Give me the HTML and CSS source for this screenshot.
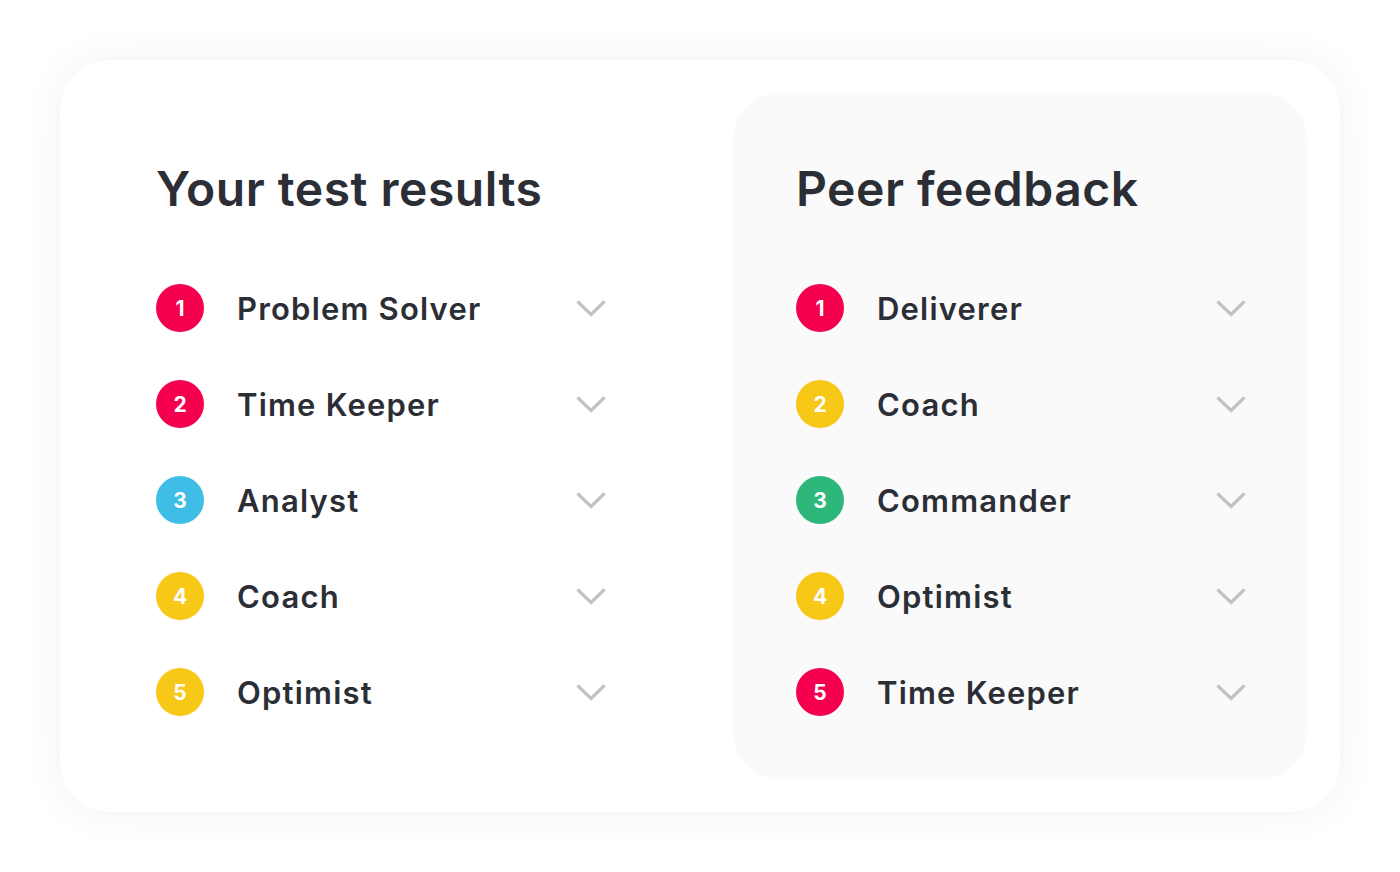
FILE: index.html
```html
<!DOCTYPE html>
<html lang="en">
<head>
    <meta charset="UTF-8">
    <meta name="viewport" content="width=device-width, initial-scale=1.0">
    <title>Results</title>
    <link rel="stylesheet" href="styles.css">
</head>
<body>
    <div class="card">
        <section class="column">
            <h2>Your test results</h2>
            <ul class="role-list">
                <li class="role"><span class="badge red">1</span><span class="role-name">Problem Solver</span><svg class="chevron" viewBox="0 0 30 17"><polyline points="1.5,1.5 15,14.5 28.5,1.5"/></svg></li>
                <li class="role"><span class="badge red">2</span><span class="role-name">Time Keeper</span><svg class="chevron" viewBox="0 0 30 17"><polyline points="1.5,1.5 15,14.5 28.5,1.5"/></svg></li>
                <li class="role"><span class="badge blue">3</span><span class="role-name">Analyst</span><svg class="chevron" viewBox="0 0 30 17"><polyline points="1.5,1.5 15,14.5 28.5,1.5"/></svg></li>
                <li class="role"><span class="badge yellow">4</span><span class="role-name">Coach</span><svg class="chevron" viewBox="0 0 30 17"><polyline points="1.5,1.5 15,14.5 28.5,1.5"/></svg></li>
                <li class="role"><span class="badge yellow">5</span><span class="role-name">Optimist</span><svg class="chevron" viewBox="0 0 30 17"><polyline points="1.5,1.5 15,14.5 28.5,1.5"/></svg></li>
            </ul>
        </section>
        <section class="column peer">
            <h2>Peer feedback</h2>
            <ul class="role-list">
                <li class="role"><span class="badge red">1</span><span class="role-name">Deliverer</span><svg class="chevron" viewBox="0 0 30 17"><polyline points="1.5,1.5 15,14.5 28.5,1.5"/></svg></li>
                <li class="role"><span class="badge yellow">2</span><span class="role-name">Coach</span><svg class="chevron" viewBox="0 0 30 17"><polyline points="1.5,1.5 15,14.5 28.5,1.5"/></svg></li>
                <li class="role"><span class="badge green">3</span><span class="role-name">Commander</span><svg class="chevron" viewBox="0 0 30 17"><polyline points="1.5,1.5 15,14.5 28.5,1.5"/></svg></li>
                <li class="role"><span class="badge yellow">4</span><span class="role-name">Optimist</span><svg class="chevron" viewBox="0 0 30 17"><polyline points="1.5,1.5 15,14.5 28.5,1.5"/></svg></li>
                <li class="role"><span class="badge red">5</span><span class="role-name">Time Keeper</span><svg class="chevron" viewBox="0 0 30 17"><polyline points="1.5,1.5 15,14.5 28.5,1.5"/></svg></li>
            </ul>
        </section>
    </div>
</body>
</html>
```

FILE: styles.css
```css
body {
    font-family: 'Inter', 'Open Sans', sans-serif;
    background: #fff;
    margin: 0;
    padding: 60px;
    color: #2b2e35;
}

.card {
    width: 1280px;
    height: 752px;
    box-sizing: border-box;
    padding: 32px;
    background: #fff;
    border-radius: 50px;
    box-shadow: 0 0 45px rgba(0, 0, 0, 0.055);
    display: grid;
    grid-template-columns: 640px 576px;
}

.column {
    padding: 68px 0 0 64px;
}

.peer {
    background: #fafafa;
    border-radius: 50px;
}

h2 {
    margin: 0 0 42px;
    font-size: 48px;
    line-height: 58px;
    font-weight: 600;
    letter-spacing: 0.5px;
}

.role-list {
    list-style: none;
    margin: 0;
    padding: 0;
    width: 450px;
}

.role {
    display: flex;
    align-items: center;
    height: 96px;
}

.badge {
    width: 48px;
    height: 48px;
    border-radius: 50%;
    display: flex;
    justify-content: center;
    align-items: center;
    color: #fff;
    font-size: 21px;
    font-weight: 700;
    flex-shrink: 0;
}

.red { background: #f5004f; }
.blue { background: #3ebde6; }
.yellow { background: #f7c817; }
.green { background: #2db77b; }

.role-name {
    margin-left: 33px;
    flex: 1;
    font-size: 31px;
    font-weight: 600;
    letter-spacing: 1.2px;
}

.chevron {
    width: 30px;
    height: 17px;
    fill: none;
    stroke: #c2c2c2;
    stroke-width: 3.2;
}
```
